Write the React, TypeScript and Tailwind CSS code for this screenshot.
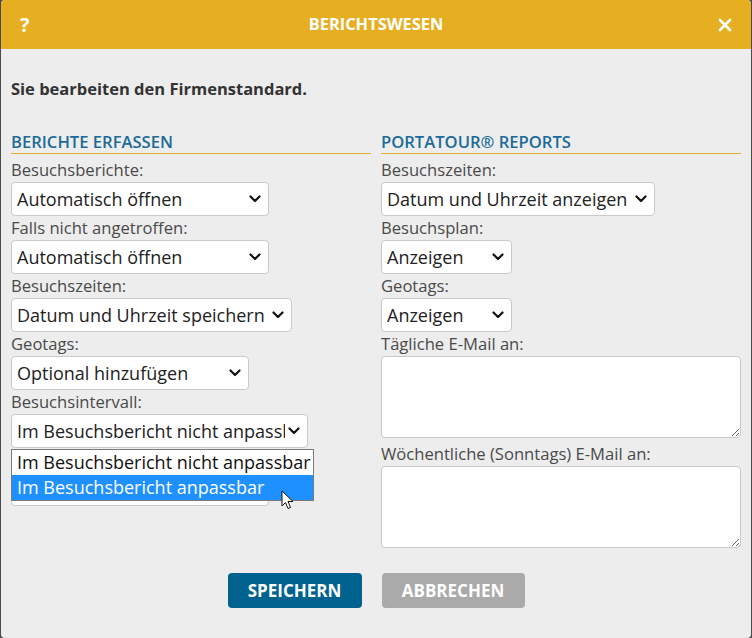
import React from 'react';

const font = { fontFamily: '"Open Sans", "Noto Sans", sans-serif' };

function Chevron() {
  return (
    <svg width="12" height="8" viewBox="0 0 12 8" className="shrink-0">
      <path d="M1.5 1.5 L6 6 L10.5 1.5" fill="none" stroke="#111" strokeWidth="2.2" strokeLinecap="round" strokeLinejoin="round" />
    </svg>
  );
}

function FakeSelect({ value, width }: { value: string; width: string }) {
  return (
    <div className={`${width} h-[34px] bg-white border border-[#c9c9c9] rounded-[4px] flex items-center justify-between gap-[3px] pl-[5px] pr-[7px] text-[18px] text-[#222] whitespace-nowrap overflow-hidden`}>
      <span className="overflow-hidden">{value}</span>
      <Chevron />
    </div>
  );
}

function Label({ children }: { children: React.ReactNode }) {
  return <div className="h-[24px] leading-[24px] text-[16.6px] text-[#4a4a4a] whitespace-nowrap">{children}</div>;
}

function Field({ label, value, width }: { label: string; value: string; width: string }) {
  return (
    <div>
      <Label>{label}</Label>
      <FakeSelect value={value} width={width} />
    </div>
  );
}

function SectionTitle({ children }: { children: React.ReactNode }) {
  return (
    <div className="text-[16.6px] font-semibold text-[#1b6a98] leading-[20px] pb-px border-b border-[#e0ad2e] mb-[4px]">
      {children}
    </div>
  );
}

export default function App() {
  return (
    <div className="w-[752px] h-[638px] bg-[#4b4b4b] overflow-hidden" style={font}>
      <div className="ml-px w-[750px] h-[638px] rounded-[4px] overflow-hidden bg-[#ededed] flex flex-col">
        <div className="h-[49px] bg-[#e6af21] flex items-center justify-between px-[19px] text-white">
          <span className="text-[20px] font-bold w-[14px]">?</span>
          <span className="text-[16.4px] font-bold">BERICHTSWESEN</span>
          <svg width="14" height="14" viewBox="0 0 14 14">
            <path d="M2 2 L12 12 M12 2 L2 12" stroke="white" strokeWidth="2.6" strokeLinecap="round" />
          </svg>
        </div>

        <div className="px-[10px] pt-[30px]">
          <div className="text-[16.5px] font-bold text-[#333] leading-[20px]">Sie bearbeiten den Firmenstandard.</div>

          <div className="flex gap-[10px] mt-[33px]">
            <div className="w-[360px] relative">
              <SectionTitle>BERICHTE ERFASSEN</SectionTitle>
              <Field label="Besuchsberichte:" value="Automatisch öffnen" width="w-[258px]" />
              <Field label="Falls nicht angetroffen:" value="Automatisch öffnen" width="w-[258px]" />
              <Field label="Besuchszeiten:" value="Datum und Uhrzeit speichern" width="w-[281px]" />
              <Field label="Geotags:" value="Optional hinzufügen" width="w-[238px]" />
              <Field label="Besuchsintervall:" value="Im Besuchsbericht nicht anpassbar" width="w-[297px]" />
              {/* field hidden under the open list */}
              <div className="mt-[24px] w-[258px] h-[34px] bg-white border border-[#c9c9c9] rounded-[4px]" />

              <div className="absolute left-0 top-[317px] w-[303px] bg-white border border-[#7a7a7a] text-[18px] leading-[25px] whitespace-nowrap">
                <div className="px-[5px] text-[#111]">Im Besuchsbericht nicht anpassbar</div>
                <div className="px-[5px] bg-[#1e90ff] text-white">Im Besuchsbericht anpassbar</div>
              </div>

              <svg className="absolute left-[270px] top-[358px]" width="13" height="20" viewBox="0 0 13 20">
                <path d="M1 1 L1 16 L4.5 12.5 L7 18.5 L9.5 17.5 L7 11.5 L12 11.5 Z" fill="white" stroke="#111" strokeWidth="1" strokeLinejoin="round" />
              </svg>
            </div>

            <div className="w-[360px]">
              <SectionTitle>PORTATOUR® REPORTS</SectionTitle>
              <Field label="Besuchszeiten:" value="Datum und Uhrzeit anzeigen" width="w-[274px]" />
              <Field label="Besuchsplan:" value="Anzeigen" width="w-[131px]" />
              <Field label="Geotags:" value="Anzeigen" width="w-[131px]" />
              <Label>Tägliche E-Mail an:</Label>
              <textarea className="block w-[360px] h-[82px] bg-white border border-[#c9c9c9] rounded-[4px] mb-[4px]" />
              <Label>Wöchentliche (Sonntags) E-Mail an:</Label>
              <textarea className="block w-[360px] h-[82px] bg-white border border-[#c9c9c9] rounded-[4px]" />
            </div>
          </div>

          <div className="flex justify-center gap-[20px] mt-[25px]">
            <button className="w-[134px] h-[35px] rounded-[4px] bg-[#00628f] text-white text-[17px] font-bold">SPEICHERN</button>
            <button className="w-[143px] h-[35px] rounded-[4px] bg-[#aaaaaa] text-white text-[17px] font-bold">ABBRECHEN</button>
          </div>
        </div>
      </div>
    </div>
  );
}
